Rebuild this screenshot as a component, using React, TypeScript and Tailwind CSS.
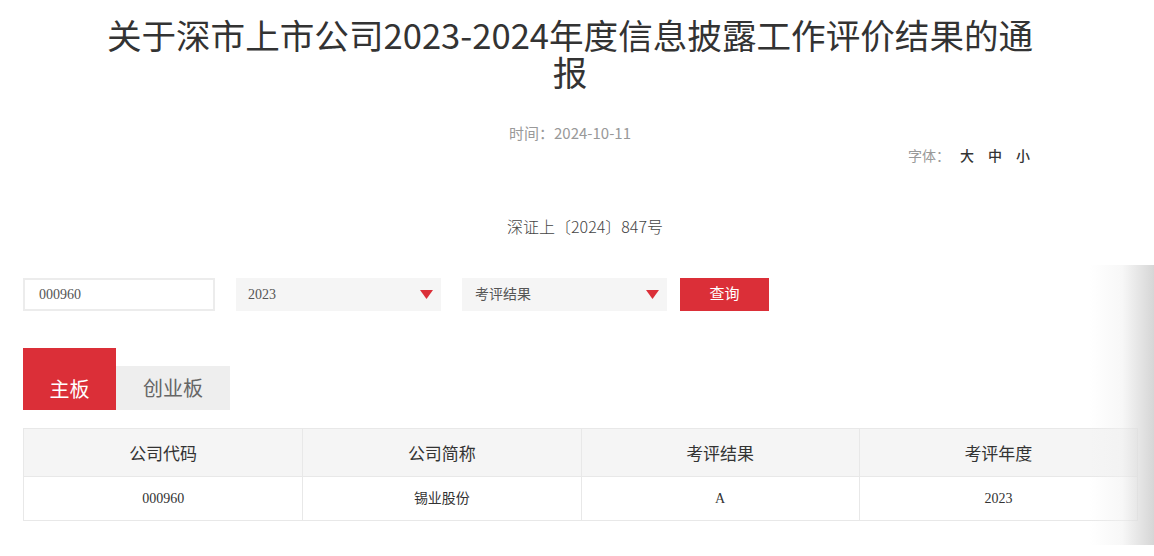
import React from "react";

const cjk = { fontFamily: '"Noto Sans CJK SC", "Noto Sans", sans-serif' };
const serif = { fontFamily: '"Liberation Serif", "Noto Sans CJK SC", serif' };

function Arrow() {
  return (
    <svg width="13" height="9" viewBox="0 0 13 9" className="shrink-0">
      <polygon points="0,0 13,0 6.5,9" fill="#db2f38" />
    </svg>
  );
}

export default function App() {
  const headers = ["公司代码", "公司简称", "考评结果", "考评年度"];
  const row = ["000960", "锡业股份", "A", "2023"];
  return (
    <div className="relative w-[1154px] h-[556px] bg-white overflow-hidden" style={cjk}>
      <h1 className="pt-[16px] mx-[95px] w-[950px] text-center text-[34.6px] leading-[37px] text-[#333] font-normal">
        关于深市上市公司2023-2024年度信息披露工作评价结果的通报
      </h1>
      <div className="mt-[33px] mx-[100px] w-[940px] text-center text-[15px] leading-[20px] text-[#999]">
        时间：2024-10-11
      </div>
      <div className="mt-[2px] flex justify-end pr-[124px] text-[14px] leading-[20px]">
        <span className="text-[#999]">字体：</span>
        <span className="ml-[10px] text-[#333] font-medium">大</span>
        <span className="ml-[14px] text-[#333] font-medium">中</span>
        <span className="ml-[14px] text-[#333] font-medium">小</span>
      </div>
      <div className="mt-[51px] pl-[16px] text-center text-[16px] leading-[20px] text-[#444] font-light">
        深证上〔2024〕847号
      </div>
      <div className="mt-[42px] pl-[23px] flex items-center text-[14px] text-[#555]" style={serif}>
        <div className="w-[192px] h-[33px] border-2 border-[#ececec] flex items-center pl-[14px]">000960</div>
        <div className="ml-[21px] w-[205px] h-[33px] bg-[#f5f5f5] flex items-center justify-between pl-[12px] pr-[8px]">
          <span>2023</span>
          <Arrow />
        </div>
        <div className="ml-[21px] w-[205px] h-[33px] bg-[#f5f5f5] flex items-center justify-between pl-[13px] pr-[8px]">
          <span>考评结果</span>
          <Arrow />
        </div>
        <div className="ml-[13px] w-[89px] h-[33px] bg-[#db2f38] text-white flex items-center justify-center text-[15px]">
          查询
        </div>
      </div>
      <div className="mt-[37px] pl-[23px] flex items-end text-[20px]">
        <div className="w-[93px] h-[62px] bg-[#db2f38] text-white flex items-center justify-center pt-[20px]">主板</div>
        <div className="w-[114px] h-[44px] bg-[#eeeeee] text-[#666] flex items-center justify-center">创业板</div>
      </div>
      <div className="mt-[18px] ml-[23px] w-[1115px] border border-[#e8e8e8]">
        <div className="grid grid-cols-4 h-[48px] bg-[#f5f5f5] border-b border-[#e8e8e8] text-[17px] text-[#333]">
          {headers.map((h, i) => (
            <div key={h} className={`flex items-center justify-center ${i > 0 ? "border-l border-[#e8e8e8]" : ""}`}>{h}</div>
          ))}
        </div>
        <div className="grid grid-cols-4 h-[43px] text-[14px] text-[#333]" style={serif}>
          {row.map((c, i) => (
            <div key={i} className={`flex items-center justify-center ${i > 0 ? "border-l border-[#e8e8e8]" : ""}`}>{c}</div>
          ))}
        </div>
      </div>
      <div className="absolute right-0 top-[265px] h-[280px] w-[64px] pointer-events-none bg-gradient-to-r from-[rgba(255,255,255,0)] via-[rgba(240,240,240,0.5)] to-[#d6d6d6]" />
    </div>
  );
}
